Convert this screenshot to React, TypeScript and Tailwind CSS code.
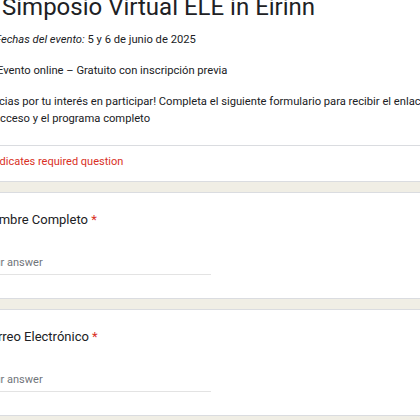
export default function App() {
  return (
    <div className="w-[420px] h-[420px] overflow-hidden bg-[#f0eee5] font-['Roboto',sans-serif] text-[#202124]">
      <div className="ml-[-40px] w-[540px] flex flex-col gap-[10px]">
        {/* header card */}
        <div className="mt-[-20px] bg-white border border-[#dadce0] rounded-lg">
          <div className="pl-[22px] pt-[10px]">
            <h1 className="ml-[19px] text-[24px] leading-[32px] whitespace-nowrap">
              Simposio Virtual ELE in Eirinn
            </h1>
            <p className="mt-[9px] text-[11.2px] leading-[16px] whitespace-nowrap">
              <span className="inline-block w-[12px]" />
              <em>Fechas del evento:</em> 5 y 6 de junio de 2025
            </p>
            <p className="mt-[15px] text-[11.2px] leading-[16px] whitespace-nowrap">
              <span className="inline-block w-[14px]" />
              Evento online – Gratuito con inscripción previa
            </p>
            <p className="mt-[14px] ml-[-4px] text-[11.2px] leading-[17px] whitespace-nowrap">
              ¡Gracias por tu interés en participar! Completa el siguiente formulario para recibir el enlace
              <br />
              de acceso y el programa completo
            </p>
          </div>
          <div className="mt-[18px] border-t border-[#dadce0]" />
          <p className="pl-[22px] pt-[8px] pb-[11px] text-[11px] leading-[16px] text-[#d93025]">
            * Indicates required question
          </p>
        </div>

        {/* Nombre */}
        <div className="bg-white border border-[#dadce0] rounded-lg pl-[21px] pt-[17px] pb-[23px]">
          <p className="text-[13px] leading-[20px]">
            Nombre Completo <span className="text-[#d93025]">*</span>
          </p>
          <div className="mt-[25px] w-[229px] pb-[3px] border-b border-[#e3e3e3] text-[11px] leading-[16px] text-[#70757a]">
            Your answer
          </div>
        </div>

        {/* Correo */}
        <div className="bg-white border border-[#dadce0] rounded-lg pl-[21px] pt-[17px] pb-[23px]">
          <p className="text-[13px] leading-[20px]">
            Correo Electrónico <span className="text-[#d93025]">*</span>
          </p>
          <div className="mt-[25px] w-[229px] pb-[3px] border-b border-[#e3e3e3] text-[11px] leading-[16px] text-[#70757a]">
            Your answer
          </div>
        </div>
      </div>
    </div>
  );
}
